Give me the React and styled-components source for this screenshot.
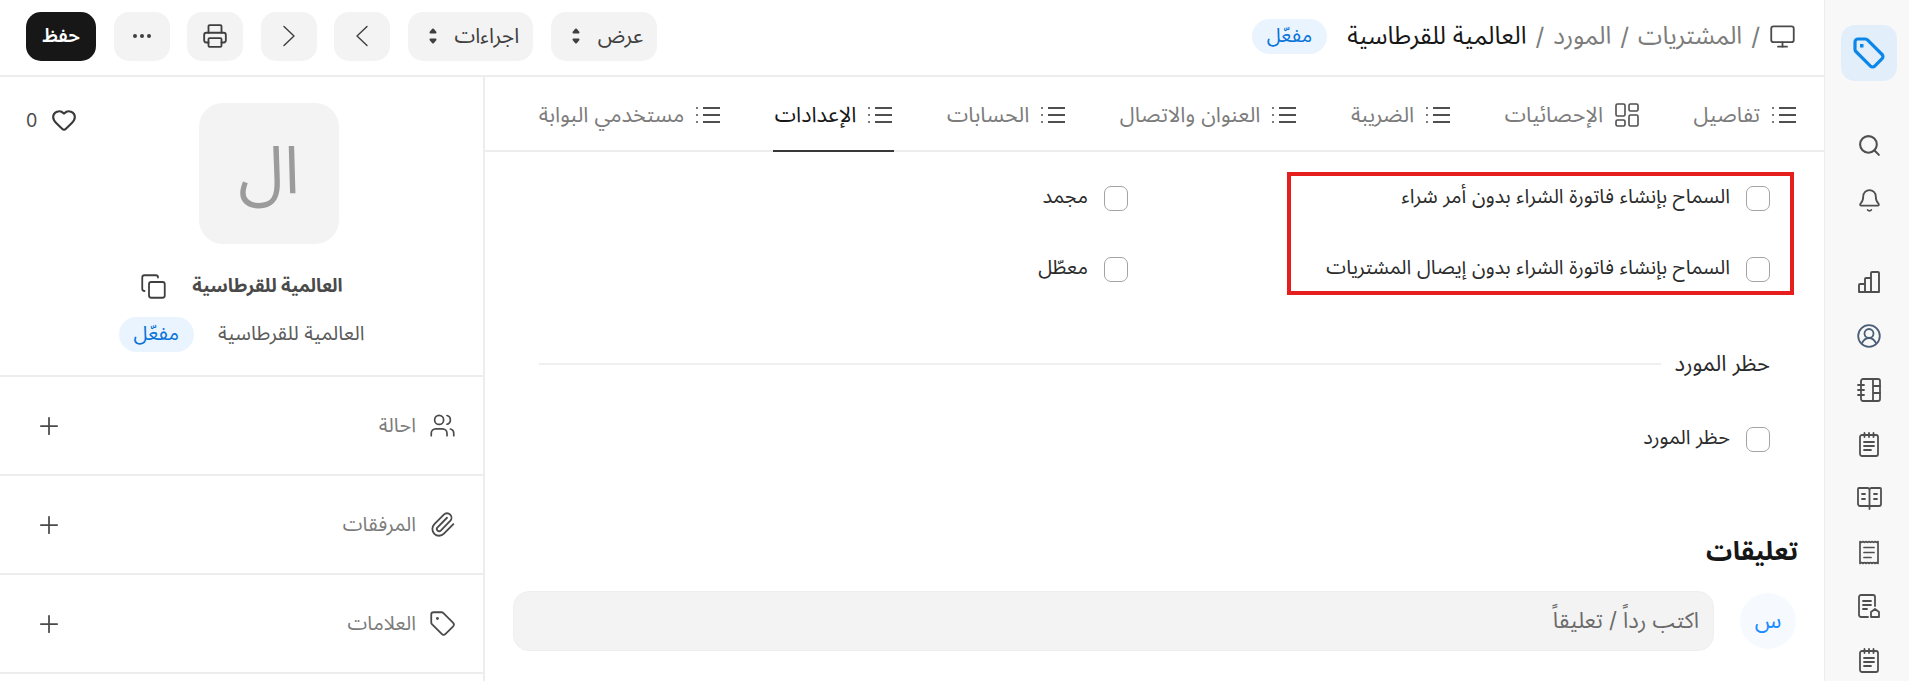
import React from "react";
import styled, { createGlobalStyle } from "styled-components";
import { Search, Bell, Monitor, Printer, MoreHorizontal, Heart, Copy, Users, Paperclip, Plus, Tag } from "lucide-react";

const Global = createGlobalStyle`
  html, body { margin: 0; padding: 0; height: 100%; overflow: hidden; background: #fff; }
  * { box-sizing: border-box; }
  #root { height: 681px; }
`;

const Page = styled.div`
  direction: rtl;
  display: flex;
  width: 1909px;
  height: 681px;
  overflow: hidden;
  font-family: Inter, "Noto Sans Arabic", "Noto Sans", sans-serif;
  color: #171717;
  background: #fff;
`;
const Rail = styled.aside`
  width: 85px;
  flex: none;
  background: #f8f8f8;
  border-left: 1px solid #ededed;
  display: flex;
  flex-direction: column;
  align-items: center;
  padding: 25px 0 0 4px;
`;
const LogoTile = styled.div`
  width: 56px;
  height: 56px;
  flex: none;
  border-radius: 14px;
  background: #e2effa;
  color: #0c86e8;
  display: flex;
  align-items: center;
  justify-content: center;
`;
const RailGroup = styled.div`
  flex: none;
  display: flex;
  flex-direction: column;
  align-items: center;
  margin-top: ${(p) => p.$top}px;
  color: #4f4f4f;
`;
const RailItem = styled.div`
  flex: none;
  height: ${(p) => p.$h || 54}px;
  display: flex;
  align-items: center;
  justify-content: center;
`;
const Main = styled.div`
  flex: 1;
  min-width: 0;
  display: flex;
  flex-direction: column;
`;
const TopBar = styled.header`
  height: 77px;
  flex: none;
  border-bottom: 2px solid #ededed;
  display: flex;
  align-items: center;
  justify-content: space-between;
  padding: 0 28px 3px 26px;
`;
const Crumbs = styled.nav`
  display: flex;
  align-items: center;
  gap: 20px;
`;
const CrumbTrail = styled.div`
  display: flex;
  align-items: center;
  gap: 9px;
  font-size: 24.5px;
  color: #7c7c7c;
  svg { color: #4a4a4a; }
`;
const Current = styled.span`
  color: #171717;
`;
const Badge = styled.span`
  height: 35px;
  padding: 0 15px;
  border-radius: 18px;
  background: #eaf4fe;
  color: #0a74d8;
  font-size: 20px;
  display: inline-flex;
  align-items: center;
`;
const Actions = styled.div`
  display: flex;
  align-items: center;
  gap: 17.5px;
`;
const ActionButton = styled.button`
  height: 49px;
  min-width: ${(p) => p.$w || 56}px;
  padding: ${(p) => (p.$menu ? "0 14px 0 20px" : "0")};
  border: 0;
  border-radius: 15px;
  background: ${(p) => (p.$dark ? "#171717" : "#f3f3f3")};
  color: ${(p) => (p.$dark ? "#fff" : "#3f3f3f")};
  font: inherit;
  font-size: ${(p) => (p.$dark ? 19 : 21)}px;
  font-weight: ${(p) => (p.$dark ? 600 : 400)};
  display: inline-flex;
  align-items: center;
  justify-content: center;
  gap: 17px;
`;
const Body = styled.div`
  flex: 1;
  min-height: 0;
  display: flex;
`;
const Content = styled.main`
  flex: 1;
  min-width: 0;
  display: flex;
  flex-direction: column;
  position: relative;
`;
const Tabs = styled.div`
  height: 75px;
  flex: none;
  border-bottom: 2px solid #ededed;
  display: flex;
  gap: 50.5px;
  padding: 0 26px 0 0;
`;
const TabItem = styled.div`
  height: 75px;
  padding: 2px 2px 0;
  display: flex;
  align-items: center;
  gap: 12px;
  font-size: 21.5px;
  color: ${(p) => (p.$active ? "#171717" : "#7c7c7c")};
  border-bottom: 2px solid ${(p) => (p.$active ? "#383838" : "transparent")};
  svg { color: #4f4f4f; flex: none; }
`;
const Form = styled.div`
  position: relative;
  padding: 0 54px 0 54px;
`;
const FieldGrid = styled.div`
  display: grid;
  grid-template-columns: 642px 1fr;
  row-gap: 46px;
  padding-top: 34px;
`;
const Check = styled.label`
  display: flex;
  align-items: center;
  gap: 16px;
  height: 25px;
  font-size: 20px;
  color: #2b2b2b;
  white-space: nowrap;
`;
const CheckText = styled.span`
  margin-top: -4px;
`;
const Box = styled.span`
  width: 24px;
  height: 25px;
  flex: none;
  border-radius: 7px;
  border: 1.5px solid #a3a3a3;
  background: #fff;
`;
const Highlight = styled.div`
  position: absolute;
  top: 20px;
  right: 30px;
  width: 507px;
  height: 123px;
  border: 4px solid #e61e1e;
  pointer-events: none;
`;
const SectionHead = styled.div`
  display: flex;
  align-items: center;
  gap: 14px;
  margin-top: 69px;
  height: 25px;
  font-size: 22px;
  color: #2b2b2b;
  white-space: nowrap;
`;
const Rule = styled.div`
  flex: 1;
  height: 2px;
  background: #efefef;
`;
const SectionBody = styled.div`
  margin-top: 51px;
`;
const Comments = styled.section`
  padding: 0 28px;
  margin-top: 79px;
`;
const CommentsTitle = styled.h2`
  margin: 0 -2px 0 0;
  font-size: 26px;
  line-height: 40px;
  font-weight: 700;
  color: #171717;
`;
const CommentRow = styled.div`
  display: flex;
  align-items: center;
  gap: 26px;
  margin-top: 20px;
`;
const CommentAvatar = styled.div`
  width: 56px;
  height: 56px;
  flex: none;
  border-radius: 50%;
  background: #f6faff;
  color: #1a8cff;
  font-size: 22px;
  display: flex;
  align-items: center;
  justify-content: center;
`;
const CommentInput = styled.div`
  flex: 1;
  height: 60px;
  border-radius: 16px;
  background: #f3f3f3;
  border: 1px solid #efefef;
  color: #6a6a6a;
  font-size: 22px;
  padding: 0 14px;
  display: flex;
  align-items: center;
`;
const Side = styled.aside`
  width: 485px;
  flex: none;
  border-right: 2px solid #ededed;
  display: flex;
  flex-direction: column;
`;
const Profile = styled.div`
  position: relative;
  height: 300px;
  flex: none;
  border-bottom: 2px solid #ededed;
  display: flex;
  flex-direction: column;
  align-items: center;
  padding-top: 26px;
`;
const Likes = styled.div`
  position: absolute;
  top: 30px;
  left: 26px;
  direction: ltr;
  display: flex;
  align-items: center;
  gap: 14px;
  font-size: 18px;
  color: #4a4a4a;
`;
const Avatar = styled.div`
  width: 140px;
  height: 141px;
  flex: none;
  margin-left: 55px;
  padding-bottom: 4px;
  border-radius: 24px;
  background: #f3f3f3;
  color: #9b9b9b;
  font-size: 66px;
  display: flex;
  align-items: center;
  justify-content: center;
`;
const TitleRow = styled.div`
  display: flex;
  align-items: center;
  gap: 25px;
  margin-top: 28px;
  height: 28px;
  font-size: 18.500px;
  font-weight: 700;
  color: #4a4a4a;
  svg { color: #3f3f3f; }
`;
const SubRow = styled.div`
  display: flex;
  align-items: center;
  gap: 24px;
  margin-top: 13px;
  font-size: 20px;
  color: #5c5c5c;
`;
const SideRow = styled.div`
  height: 99px;
  flex: none;
  border-bottom: 2px solid #ededed;
  display: flex;
  align-items: center;
  justify-content: space-between;
  padding: 0 27px 0 35px;
  svg { color: #4a4a4a; }
`;
const SideLabel = styled.div`
  display: flex;
  align-items: center;
  gap: 13px;
  font-size: 20px;
  color: #7c7c7c;
`;

const line = { fill: "none", stroke: "currentColor", strokeWidth: 1.7, strokeLinecap: "round", strokeLinejoin: "round" };

const ListIcon = () => (
  <svg width="24" height="18" viewBox="0 0 24 18" fill="none" stroke="currentColor" strokeWidth="2">
    <path d="M7 2h17M7 9h17M7 16h17" />
    <path d="M0 2h3M0 9h3M0 16h3" strokeDasharray="2 1.5" strokeWidth="1.5" />
  </svg>
);
const GridIcon = () => (
  <svg width="24" height="24" viewBox="0 0 24 24" {...line} strokeWidth="1.6">
    <rect x="1" y="1" width="9" height="12" rx="1.5" />
    <rect x="14" y="1" width="9" height="7" rx="1.5" />
    <rect x="1" y="17" width="9" height="6" rx="1.5" />
    <rect x="14" y="12" width="9" height="11" rx="1.5" />
  </svg>
);
const SortIcon = () => (
  <svg width="10" height="18" viewBox="0 0 10 18" fill="none" stroke="currentColor" strokeWidth="2" strokeLinejoin="round">
    <path d="M2.5 5.5 5 2.5l2.5 3Z" />
    <path d="M2.5 12.5 5 15.5l2.5-3Z" />
  </svg>
);
const ChevronLeftIcon = () => (
  <svg width="14" height="22" viewBox="0 0 14 22" {...line} strokeWidth="1.4">
    <path d="M12 1.500 2 11l10 9.500" />
  </svg>
);
const ChevronRightIcon = () => (
  <svg width="14" height="22" viewBox="0 0 14 22" {...line} strokeWidth="1.4">
    <path d="M2 1.500 12 11 2 20.500" />
  </svg>
);
const BarsIcon = () => (
  <svg width="22" height="22" viewBox="0 0 22 22" {...line} strokeWidth="1.9">
    <path d="M1 21v-7a1 1 0 0 1 1-1h5v8H1ZM7 21V8a1 1 0 0 1 1-1h5v14H7ZM13 21V2a1 1 0 0 1 1-1h6a1 1 0 0 1 1 1v19h-8Z" />
  </svg>
);
const UserCircleIcon = () => (
  <svg width="24" height="24" viewBox="0 0 24 24" fill="none" stroke="#4a5f75" strokeWidth="1.8">
    <circle cx="12" cy="12" r="10.8" />
    <circle cx="12" cy="9.5" r="4.5" />
    <path d="M4.8 19.5c1.4-3 4-5.5 7.2-5.5s5.8 2.500 7.2 5.500" />
  </svg>
);
const NotebookIcon = () => (
  <svg width="24" height="24" viewBox="0 0 24 24" {...line} strokeWidth="1.8">
    <path d="M4 3.5V3a2 2 0 0 1 2-2h15a2 2 0 0 1 2 2v18a2 2 0 0 1-2 2H6a2 2 0 0 1-2-2" />
    <path d="M16 1v22M16 8h7M16 15h7M1 7h6M1 12h6M1 17h6M4 4v16" />
  </svg>
);
const NoteIcon = () => (
  <svg width="20" height="25" viewBox="0 0 20 25" {...line} strokeWidth="1.8">
    <rect x="1" y="3" width="18" height="21" rx="2" />
    <path d="M5.5 1v4M10 1v4M14.500 1v4M5 10h10M5 14h10M5 18h7" />
  </svg>
);
const BookIcon = () => (
  <svg width="25" height="24" viewBox="0 0 25 24" {...line} strokeWidth="1.8">
    <path d="M12.500 20H3a2 2 0 0 1-2-2V3a1 1 0 0 1 1-1h8.500a2 2 0 0 1 2 2v19M12.500 20H22a2 2 0 0 0 2-2V3a1 1 0 0 0-1-1h-8.500a2 2 0 0 0-2 2" />
    <path d="M5 8h3M5 13h3M17 8h3M17 13h3" />
  </svg>
);
const ReceiptIcon = () => (
  <svg width="20" height="25" viewBox="0 0 20 25" {...line} strokeWidth="1.7">
    <path d="M1 1.500q1.500 1.500 3 0q1.500 1.500 3 0q1.500 1.500 3 0q1.500 1.500 3 0q1.500 1.500 3 0q1.500 1.500 3 0V23.500q-1.500-1.500-3 0q-1.500-1.500-3 0q-1.500-1.500-3 0q-1.500-1.500-3 0q-1.500-1.500-3 0q-1.500-1.500-3 0Z" />
    <path d="M5 7.500h10M5 12.500h10M5 17.500h7" />
  </svg>
);
const DocHomeIcon = () => (
  <svg width="22" height="24" viewBox="0 0 22 24" {...line} strokeWidth="1.8">
    <path d="M10 23H3a2 2 0 0 1-2-2V3a2 2 0 0 1 2-2h12a2 2 0 0 1 2 2v9" />
    <path d="M5 7h8M5 11h8M5 15h4" />
    <path d="M13 23v-5l4-3 4 3v5h-8Z" />
  </svg>
);
const LogoIcon = () => (
  <svg width="34" height="34" viewBox="0 0 34 34" fill="none" stroke="currentColor" strokeWidth="3.2" strokeLinejoin="round">
    <path d="M3 6a3 3 0 0 1 3-3h7.500a3 3 0 0 1 2 .9l14.600 14.600a3 3 0 0 1 0 4.200l-7.400 7.400a3 3 0 0 1-4.200 0L3.900 15.500a3 3 0 0 1-.9-2Z" />
    <rect x="8" y="8" width="3.500" height="3.500" fill="currentColor" stroke="none" />
  </svg>
);

const tabs = [
  { label: "تفاصيل" },
  { label: "الإحصائيات", grid: true },
  { label: "الضريبة" },
  { label: "العنوان والاتصال" },
  { label: "الحسابات" },
  { label: "الإعدادات", active: true },
  { label: "مستخدمي البوابة" },
];

const CheckField = ({ children }) => (
  <Check><Box /><CheckText>{children}</CheckText></Check>
);

export default function App() {
  return (
    <Page>
      <Global />
      <Rail>
        <LogoTile><LogoIcon /></LogoTile>
        <RailGroup $top={37}>
          <RailItem $h={54}><Search size={25} strokeWidth={2} /></RailItem>
          <RailItem $h={56}><Bell size={25} strokeWidth={1.7} /></RailItem>
        </RailGroup>
        <RailGroup $top={27}>
          <RailItem><BarsIcon /></RailItem>
          <RailItem><UserCircleIcon /></RailItem>
          <RailItem><NotebookIcon /></RailItem>
          <RailItem><NoteIcon /></RailItem>
          <RailItem><BookIcon /></RailItem>
          <RailItem><ReceiptIcon /></RailItem>
          <RailItem><DocHomeIcon /></RailItem>
          <RailItem><NoteIcon /></RailItem>
        </RailGroup>
      </Rail>
      <Main>
        <TopBar>
          <Crumbs>
            <CrumbTrail>
              <Monitor size={27} strokeWidth={1.6} />
              <span>/</span>
              <span>المشتريات</span>
              <span>/</span>
              <span>المورد</span>
              <span>/</span>
              <Current>العالمية للقرطاسية</Current>
            </CrumbTrail>
            <Badge>مفعّل</Badge>
          </Crumbs>
          <Actions>
            <ActionButton $menu>عرض <SortIcon /></ActionButton>
            <ActionButton $menu>اجراءات <SortIcon /></ActionButton>
            <ActionButton><ChevronLeftIcon /></ActionButton>
            <ActionButton><ChevronRightIcon /></ActionButton>
            <ActionButton><Printer size={26} strokeWidth={1.7} /></ActionButton>
            <ActionButton><MoreHorizontal size={24} strokeWidth={2} /></ActionButton>
            <ActionButton $dark $w={70}>حفظ</ActionButton>
          </Actions>
        </TopBar>
        <Body>
          <Content>
            <Tabs>
              {tabs.map((t) => (
                <TabItem key={t.label} $active={t.active}>
                  {t.grid ? <GridIcon /> : <ListIcon />}
                  <span>{t.label}</span>
                </TabItem>
              ))}
            </Tabs>
            <Form>
              <FieldGrid>
                <CheckField>السماح بإنشاء فاتورة الشراء بدون أمر شراء</CheckField>
                <CheckField>مجمد</CheckField>
                <CheckField>السماح بإنشاء فاتورة الشراء بدون إيصال المشتريات</CheckField>
                <CheckField>معطّل</CheckField>
              </FieldGrid>
              <Highlight />
              <SectionHead>حظر المورد<Rule /></SectionHead>
              <SectionBody><CheckField>حظر المورد</CheckField></SectionBody>
            </Form>
            <Comments>
              <CommentsTitle>تعليقات</CommentsTitle>
              <CommentRow>
                <CommentAvatar>س</CommentAvatar>
                <CommentInput>اكتب رداً / تعليقاً</CommentInput>
              </CommentRow>
            </Comments>
          </Content>
          <Side>
            <Profile>
              <Likes><span>0</span><Heart size={26} strokeWidth={2} color="#3a3a3a" /></Likes>
              <Avatar>ال</Avatar>
              <TitleRow>العالمية للقرطاسية<Copy size={27} strokeWidth={1.6} /></TitleRow>
              <SubRow>العالمية للقرطاسية<Badge>مفعّل</Badge></SubRow>
            </Profile>
            <SideRow>
              <SideLabel><Users size={27} strokeWidth={1.5} />احالة</SideLabel>
              <Plus size={28} strokeWidth={1.5} />
            </SideRow>
            <SideRow>
              <SideLabel><Paperclip size={27} strokeWidth={1.6} />المرفقات</SideLabel>
              <Plus size={28} strokeWidth={1.5} />
            </SideRow>
            <SideRow>
              <SideLabel><Tag size={27} strokeWidth={1.6} />العلامات</SideLabel>
              <Plus size={28} strokeWidth={1.5} />
            </SideRow>
          </Side>
        </Body>
      </Main>
    </Page>
  );
}
